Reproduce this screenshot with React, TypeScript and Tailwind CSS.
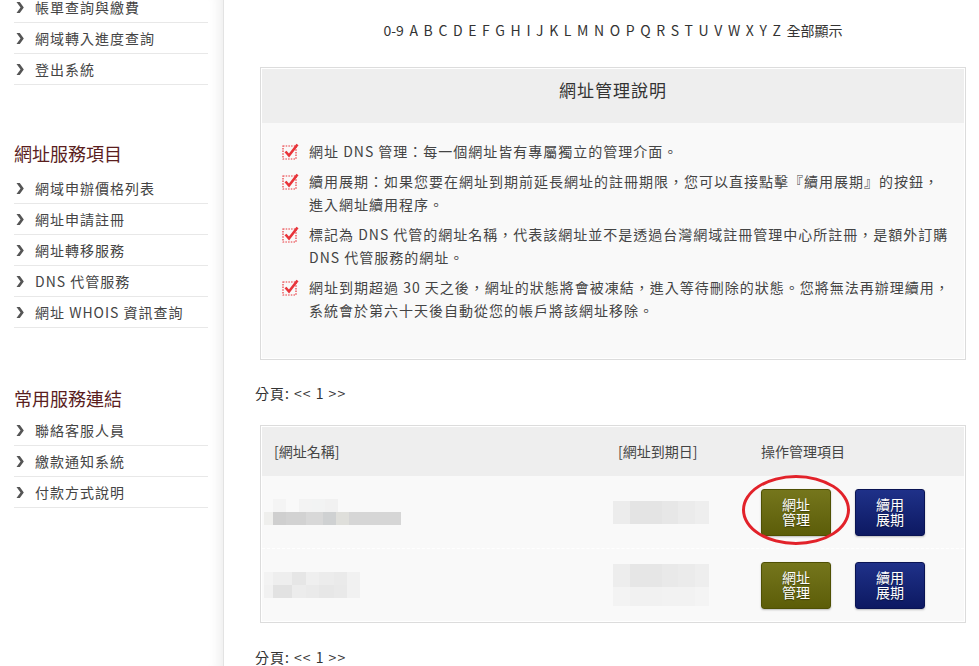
import React from 'react';

const font = { fontFamily: '"Noto Sans CJK TC", "Noto Sans", sans-serif' };

const accountLinks = ['帳單查詢與繳費', '網域轉入進度查詢', '登出系統'];
const serviceLinks = ['網域申辦價格列表', '網址申請註冊', '網址轉移服務', 'DNS 代管服務', '網址 WHOIS 資訊查詢'];
const commonLinks = ['聯絡客服人員', '繳款通知系統', '付款方式說明'];

const letters = ['0-9', ...'ABCDEFGHIJKLMNOPQRSTUVWXYZ'.split(''), '全部顯示'];

const notes: string[] = [
  '網址 DNS 管理：每一個網址皆有專屬獨立的管理介面。',
  '續用展期：如果您要在網址到期前延長網址的註冊期限，您可以直接點擊『續用展期』的按鈕，進入網址續用程序。',
  '標記為 DNS 代管的網址名稱，代表該網址並不是透過台灣網域註冊管理中心所註冊，是額外訂購 DNS 代管服務的網址。',
  '網址到期超過 30 天之後，網址的狀態將會被凍結，進入等待刪除的狀態。您將無法再辦理續用，系統會於第六十天後自動從您的帳戶將該網址移除。',
];

function Chevron() {
  return (
    <svg className="w-[8px] h-[11px] shrink-0" viewBox="0 0 8 11">
      <polygon points="0.5,0 3.8,0 7.8,5.5 3.8,11 0.5,11 4.5,5.5" fill="#555" />
    </svg>
  );
}

function SideList({ items }: { items: string[] }) {
  return (
    <ul>
      {items.map((t) => (
        <li key={t} className="h-[31px] flex items-center gap-[11px] pl-[2px] border-b border-[#e8e8e8] text-[14px] tracking-[1px] text-[#444]">
          <Chevron />
          <span>{t}</span>
        </li>
      ))}
    </ul>
  );
}

function CheckIcon() {
  return (
    <svg className="w-[17px] h-[17px] shrink-0 mt-[3px]" viewBox="0 0 17 17">
      <rect x="1" y="3" width="13" height="13" fill="none" stroke="#e8343a" strokeWidth="1.2" strokeDasharray="1.5 1.2" />
      <path d="M3.5 8.5 L7 12.5 L15.5 1.5" fill="none" stroke="#e8343a" strokeWidth="2.6" strokeLinejoin="miter" />
    </svg>
  );
}

function Blur({ cells, h }: { cells: [number, string][]; h: number }) {
  return (
    <div className="flex">
      {cells.map(([w, c], i) => (
        <div key={i} style={{ width: w, height: h, background: c }} />
      ))}
    </div>
  );
}

function ActionButton({ top, bottom, color }: { top: string; bottom: string; color: 'olive' | 'navy' }) {
  const cls =
    color === 'olive'
      ? 'bg-gradient-to-b from-[#75761c] to-[#5c5d08] border-[#4f5004]'
      : 'bg-gradient-to-b from-[#1f3189] to-[#0d1962] border-[#0a1454]';
  return (
    <div className={`w-[70px] h-[47px] rounded-[3px] border flex flex-col items-center justify-center text-white text-[14px] leading-[15px] shadow-[0_1px_2px_rgba(0,0,0,0.25)] ${cls}`}>
      <span className="[text-shadow:0_1px_1px_rgba(0,0,0,0.4)]">{top}</span>
      <span className="[text-shadow:0_1px_1px_rgba(0,0,0,0.4)]">{bottom}</span>
    </div>
  );
}

function Paging() {
  return (
    <div className="text-[14px] tracking-[1px] text-[#333] h-[20px] flex items-center">分頁: &lt;&lt; 1 &gt;&gt;</div>
  );
}

export default function App() {
  return (
    <div className="w-[979px] h-[666px] overflow-hidden bg-white flex" style={font}>
      {/* Sidebar */}
      <aside className="w-[224px] shrink-0 border-r border-[#e3e3e3] shadow-[inset_-14px_0_12px_-10px_rgba(0,0,0,0.07)] pl-[14px] pr-[15px]">
        <div className="-mt-[8px]">
          <SideList items={accountLinks} />
        </div>
        <h3 className="mt-[55px] h-[26px] flex items-center text-[18px] text-[#5a1e1e]">網址服務項目</h3>
        <div className="mt-[7px]">
          <SideList items={serviceLinks} />
        </div>
        <h3 className="mt-[57px] h-[26px] flex items-center text-[18px] text-[#5a1e1e]">常用服務連結</h3>
        <div className="mt-[4px]">
          <SideList items={commonLinks} />
        </div>
      </aside>

      {/* Main */}
      <main className="flex-1 pl-[31px] pt-[20px]">
        <div className="w-[711px] flex justify-center gap-[5.6px] pl-[5px] text-[14px] text-[#333] h-[20px] items-center">
          {letters.map((l) => (
            <span key={l}>{l}</span>
          ))}
        </div>

        <section className="mt-[27px] ml-[5px] w-[706px] border border-[#dcdcdc] p-px bg-white">
          <div className="h-[54px] bg-[#eeeeee] flex justify-center pt-[8px] text-[17px] tracking-[1px] text-[#333]">網址管理說明</div>
          <div className="bg-[#f9f9f9] pt-[17px] pb-[36px] pl-[20px] pr-[12px] flex flex-col gap-[7px]">
            {notes.map((n, i) => (
              <div key={i} className="flex gap-[10px]">
                <CheckIcon />
                <p className="text-[14px] leading-[23px] tracking-[1px] text-[#444]">{n}</p>
              </div>
            ))}
          </div>
        </section>

        <div className="mt-[23px]">
          <Paging />
        </div>

        <section className="mt-[22px] ml-[5px] w-[706px] border border-[#dcdcdc] p-px bg-white">
          <div className="h-[49px] bg-[#eeeeee] flex items-center text-[14px] text-[#444]">
            <div className="w-[356px] pl-[12px]">[網址名稱]</div>
            <div className="w-[143px]">[網址到期日]</div>
            <div>操作管理項目</div>
          </div>

          <div className="bg-[#f9f9f9]">
            {/* row 1 */}
            <div className="h-[73px] flex items-center border-b border-dashed border-white">
              <div className="w-[351px] pl-[2px] flex flex-col">
                <Blur h={13} cells={[[9, '#f9f9f9'], [13, '#f4f4f4'], [13, '#f9f9f9'], [13, '#f3f3f3'], [13, '#f2f3f3'], [13, '#f1f1f1'], [19, '#f9f9f9']]} />
                <Blur h={13} cells={[[9, '#efefed'], [13, '#cfcfcf'], [20, '#d2d2d2'], [17, '#d8d8d8'], [13, '#cfd1d2'], [13, '#dfdfdb'], [52, '#d6d6d6']]} />
              </div>
              <div className="w-[146px] flex flex-col">
                <Blur h={23} cells={[[17, '#ececec'], [32, '#e4e4e4'], [16, '#e7e7e7'], [17, '#ebebeb'], [14, '#eeeeee']]} />
              </div>
              <div className="relative flex gap-[24px] ml-[2px]">
                <div className="absolute left-[-19px] top-[-14px] w-[108px] h-[70px] rounded-[50%] border-[3px] border-[#e2222a]" />
                <ActionButton top="網址" bottom="管理" color="olive" />
                <ActionButton top="續用" bottom="展期" color="navy" />
              </div>
            </div>

            {/* row 2 */}
            <div className="h-[72px] flex items-center">
              <div className="w-[351px] pl-[2px] flex flex-col">
                <Blur h={13} cells={[[9, '#f3f3f3'], [19, '#eeeeee'], [14, '#e6e6e6'], [13, '#efefef'], [15, '#ececec'], [13, '#eaeaea'], [13, '#f1f1f1']]} />
                <Blur h={13} cells={[[9, '#f1f1f1'], [19, '#e2e2e2'], [14, '#ececec'], [13, '#eaeaea'], [15, '#e7e7e7'], [13, '#e9e9e9'], [13, '#f1f1f1']]} />
              </div>
              <div className="w-[146px] flex flex-col">
                <Blur h={23} cells={[[17, '#ededed'], [32, '#e6e6e6'], [16, '#e9e9e9'], [17, '#ebebeb'], [14, '#eeeeee']]} />
                <Blur h={19} cells={[[17, '#f3f3f3'], [32, '#f1f1f1'], [16, '#f2f2f2'], [17, '#f2f2f2'], [14, '#f4f4f4']]} />
              </div>
              <div className="flex gap-[24px] ml-[2px]">
                <ActionButton top="網址" bottom="管理" color="olive" />
                <ActionButton top="續用" bottom="展期" color="navy" />
              </div>
            </div>
          </div>
        </section>

        <div className="mt-[24px]">
          <Paging />
        </div>
      </main>
    </div>
  );
}
